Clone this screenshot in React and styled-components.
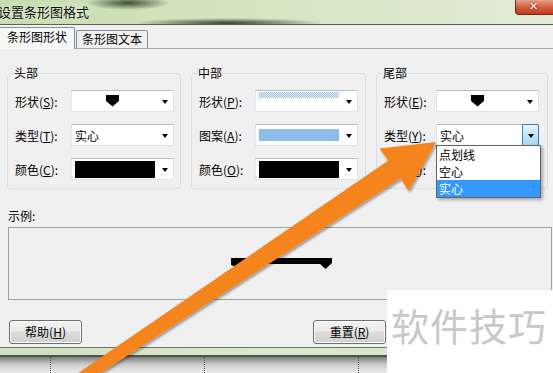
import styled, { createGlobalStyle } from 'styled-components';

const GlobalStyle = createGlobalStyle`
  html, body {
    margin: 0;
    padding: 0;
    background: #fff;
  }
  body {
    font-family: "Noto Sans CJK SC", "Noto Sans", sans-serif;
  }
`;

const Screen = styled.div`
  position: relative;
  width: 553px;
  height: 373px;
  overflow: hidden;
  background: #f0f0f0;
  font-size: 12px;
  color: #000;
`;

const TitleBar = styled.div`
  height: 24px;
  display: flex;
  align-items: center;
  justify-content: space-between;
  border-bottom: 1px solid #5b5f57;
  background:
    radial-gradient(ellipse 42px 7px at 128px 3px, rgba(38, 52, 32, 0.85), rgba(38, 52, 32, 0) 100%),
    radial-gradient(ellipse 95px 5px at 228px 23px, rgba(35, 45, 30, 0.9), rgba(35, 45, 30, 0) 100%),
    linear-gradient(90deg, #c6dbad 0%, #d3e3bf 35%, #d9e7c9 65%, #e1ebd6 100%);
`;

const Title = styled.div`
  margin-left: -2px;
  font-size: 13px;
  line-height: 24px;
  color: #111;
  text-shadow: 0 0 6px rgba(255, 255, 255, 0.9);
`;

const CloseButton = styled.div`
  align-self: flex-start;
  width: 44px;
  height: 15px;
  margin-right: -6px;
  box-sizing: border-box;
  border: 1px solid #7c2614;
  border-top: none;
  border-radius: 0 0 0 4px;
  background: linear-gradient(#eaa08a, #d2603f 50%, #c2391a);
  color: #fff;
  font-family: "DejaVu Sans", sans-serif;
  font-weight: bold;
  font-size: 11px;
  line-height: 14px;
  padding-left: 13px;
  text-shadow: 0 0 2px #5a1a0a;
`;

const TabStrip = styled.div`
  height: 23px;
  display: flex;
  align-items: flex-end;
  border-bottom: 1px solid #a5a9b0;
`;

const Tab = styled.div`
  box-sizing: border-box;
  height: ${(p) => (p.$active ? '22px' : '18px')};
  margin-bottom: ${(p) => (p.$active ? '-1px' : '0')};
  padding: 0 ${(p) => (p.$active ? '7px' : '5px')};
  margin-left: ${(p) => (p.$active ? '-1px' : '1px')};
  border: 1px solid #898c95;
  border-bottom: none;
  border-radius: 2px 2px 0 0;
  background: ${(p) => (p.$active ? '#f7f7f7' : '#f0f0f0')};
  line-height: ${(p) => (p.$active ? '17px' : '16px')};
  white-space: nowrap;
`;

const Panel = styled.div`
  box-sizing: border-box;
  height: 298px;
  padding: 16px 0 0 7px;
  display: flex;
  flex-direction: column;
`;

const Groups = styled.div`
  display: grid;
  grid-template-columns: 174px 175px 172px;
  column-gap: 10px;
`;

const Group = styled.fieldset`
  margin: 0;
  min-width: 0;
  padding: 9px 0 8px 7px;
  border: 1px solid #d5dfe5;
  border-radius: 3px;
  display: flex;
  flex-direction: column;
  gap: 12px;
`;

const Legend = styled.legend`
  padding: 0 1px;
  margin-left: -2px;
  line-height: 16px;
  font-size: 12px;
`;

const Row = styled.div`
  display: flex;
  align-items: center;
  height: 22px;
`;

const Label = styled.div`
  width: ${(p) => p.$w}px;
  flex: none;
  white-space: nowrap;
  u {
    text-decoration: underline;
  }
`;

const Combo = styled.div`
  position: relative;
  width: 103px;
  height: 22px;
  box-sizing: border-box;
  flex: none;
  display: flex;
  align-items: stretch;
  background: #fff;
  border: 1px solid #dfe4ea;
  border-top-color: #b9bcc2;
`;

const ComboValue = styled.div`
  flex: 1;
  display: flex;
  align-items: center;
  justify-content: ${(p) => (p.$center ? 'center' : 'flex-start')};
  padding-left: ${(p) => (p.$center ? '0' : '3px')};
  padding-right: ${(p) => (p.$center ? '4px' : '0')};
  min-width: 0;
`;

const DropButton = styled.div`
  width: 17px;
  flex: none;
  display: flex;
  align-items: center;
  justify-content: center;
  padding-top: 2px;
  box-sizing: border-box;
  border: ${(p) => (p.$focus ? '1px solid #3c7fb1' : 'none')};
  margin: ${(p) => (p.$focus ? '-1px -1px -1px 0' : '0')};
  background: ${(p) => (p.$focus ? 'linear-gradient(#e9f5fc, #c6e4f6 50%, #a7d4f0)' : 'transparent')};
  border-radius: ${(p) => (p.$focus ? '0 2px 2px 0' : '0')};

  &::before {
    content: '';
    border-left: 3.5px solid transparent;
    border-right: 3.5px solid transparent;
    border-top: 4px solid #000;
  }
`;

const Swatch = styled.div`
  width: 80px;
  height: ${(p) => p.$h}px;
  align-self: ${(p) => (p.$top ? 'flex-start' : 'center')};
  margin-top: ${(p) => (p.$top ? '1px' : '0')};
  background: ${(p) => p.$bg};
`;

const DropList = styled.div`
  position: absolute;
  top: 100%;
  left: -1px;
  width: 105px;
  box-sizing: border-box;
  border: 1px solid #646464;
  background: #fff;
  box-shadow: 2px 2px 3px rgba(0, 0, 0, 0.3);
  z-index: 2;
`;

const DropItem = styled.div`
  height: 17px;
  line-height: 17px;
  padding-left: 2px;
  background: ${(p) => (p.$selected ? '#3399ff' : 'transparent')};
  color: ${(p) => (p.$selected ? '#fff' : '#000')};
`;

const SampleLabel = styled.div`
  margin-top: 19px;
  margin-left: 1px;
  line-height: 16px;
`;

const Preview = styled.div`
  margin: 3px 0 0 1px;
  width: 544px;
  height: 73px;
  box-sizing: border-box;
  border: 1px solid #a0a0a0;
  display: flex;
  align-items: center;
  justify-content: center;
  padding-top: 1px;
  padding-left: 2px;
`;

const ButtonRow = styled.div`
  margin: 20px 0 0 2px;
  display: flex;
  gap: 231px;
`;

const Button = styled.div`
  width: 73px;
  height: 24px;
  box-sizing: border-box;
  border: 1px solid #707070;
  border-radius: 3px;
  background: linear-gradient(#f2f2f2, #ebebeb 45%, #dddddd 50%, #cfcfcf);
  box-shadow: inset 0 0 0 1px #fcfcfc;
  display: flex;
  align-items: center;
  justify-content: center;
  line-height: 22px;
  u {
    text-decoration: underline;
  }
`;

const BottomFrame = styled.div`
  border-top: 1px solid #6f7369;
`;

const GreenBand = styled.div`
  height: 7px;
  background: linear-gradient(90deg, #cfe0bd, #dbe8cd 50%, #d6e4c5);
  border-bottom: 2px solid #4f524c;
`;

const UnderWindow = styled.div`
  height: 20px;
  display: flex;
  background: linear-gradient(#7d7d7d, #c9c9c9 35%, #e6e6e6 70%, #ececec);
`;

const Column = styled.div`
  width: ${(p) => p.$w}px;
  flex: none;
  border-right: 1px dotted #555;
  box-sizing: border-box;
`;

const Watermark = styled.div`
  position: absolute;
  left: 387px;
  top: 290px;
  width: 170px;
  height: 90px;
  background: #fff;
  box-sizing: border-box;
  padding: 12px 0 0 4px;
  font-size: 38px;
  line-height: 46px;
  letter-spacing: 1px;
  color: #c8c8c8;
  white-space: nowrap;
`;

const Overlay = styled.svg`
  position: absolute;
  left: 0;
  top: 0;
  pointer-events: none;
  z-index: 3;
`;

const groups = [
  {
    title: '头部',
    labelWidth: 56,
    rows: [
      { label: '形状', key: 'S', kind: 'shape' },
      { label: '类型', key: 'T', kind: 'text', text: '实心' },
      { label: '颜色', key: 'C', kind: 'color' },
    ],
  },
  {
    title: '中部',
    labelWidth: 56,
    rows: [
      { label: '形状', key: 'P', kind: 'pattern' },
      { label: '图案', key: 'A', kind: 'fill' },
      { label: '颜色', key: 'O', kind: 'color' },
    ],
  },
  {
    title: '尾部',
    labelWidth: 52,
    rows: [
      { label: '形状', key: 'E', kind: 'shape' },
      { label: '类型', key: 'Y', kind: 'text', text: '实心', open: true },
      { label: '颜色', key: 'L', kind: 'color' },
    ],
  },
];

const dropOptions = ['点划线', '空心', '实心'];

const ShapeIcon = () => (
  <svg width="13" height="12" viewBox="0 0 13 12">
    <polygon points="0,0 13,0 13,6 6.5,11.5 0,6" fill="#000" />
  </svg>
);

const ComboContent = ({ kind, text }) => {
  if (kind === 'shape') {
    return (
      <ComboValue $center>
        <ShapeIcon />
      </ComboValue>
    );
  }
  if (kind === 'text') return <ComboValue>{text}</ComboValue>;
  if (kind === 'pattern') {
    return (
      <ComboValue>
        <Swatch
          $top
          $h={6}
          $bg="repeating-conic-gradient(#9cc3e6 0 25%, #e4eef8 0 50%) 0 0 / 2px 2px"
        />
      </ComboValue>
    );
  }
  if (kind === 'fill') {
    return (
      <ComboValue>
        <Swatch $h={12} $bg="#8fbde9" />
      </ComboValue>
    );
  }
  return (
    <ComboValue>
      <Swatch $h={17} $bg="#000" />
    </ComboValue>
  );
};

// 下拉框：带打开状态时显示列表
const ComboBox = ({ row }) => (
  <Combo>
    <ComboContent kind={row.kind} text={row.text} />
    <DropButton $focus={row.open} />
    {row.open && (
      <DropList>
        {dropOptions.map((o) => (
          <DropItem key={o} $selected={o === row.text}>
            {o}
          </DropItem>
        ))}
      </DropList>
    )}
  </Combo>
);

const PreviewLine = () => (
  <svg width="101" height="12" viewBox="0 0 101 12">
    <polygon points="0,0 18,0 18,6 8,10 0,7" fill="#000" />
    <rect x="0" y="0" width="100" height="6" fill="#000" />
    <polygon points="88,0 101,0 101,5 94.5,11 88,5" fill="#000" />
  </svg>
);

// 橙色箭头：从左下角指向下拉框
const Arrow = () => (
  <Overlay width="553" height="373" viewBox="0 0 553 373">
    <defs>
      <filter id="arrowShadow" x="-10%" y="-10%" width="130%" height="130%">
        <feDropShadow dx="1.5" dy="2" stdDeviation="1.2" floodColor="#000" floodOpacity="0.35" />
      </filter>
    </defs>
    <polygon
      points="436,142 408.5,191 400.5,178.5 81.5,385.2 74.9,375.2 388.3,160.6 379.5,148.5"
      fill="#f6841e"
      filter="url(#arrowShadow)"
    />
  </Overlay>
);

const App = () => {
  return (
    <>
      <GlobalStyle />
      <Screen>
        <TitleBar>
          <Title>设置条形图格式</Title>
          <CloseButton>✕</CloseButton>
        </TitleBar>
        <TabStrip>
          <Tab $active>条形图形状</Tab>
          <Tab>条形图文本</Tab>
        </TabStrip>
        <Panel>
          <Groups>
            {groups.map((g) => (
              <Group key={g.title}>
                <Legend>{g.title}</Legend>
                {g.rows.map((r) => (
                  <Row key={r.label}>
                    <Label $w={g.labelWidth}>
                      {r.label}(<u>{r.key}</u>):
                    </Label>
                    <ComboBox row={r} />
                  </Row>
                ))}
              </Group>
            ))}
          </Groups>
          <SampleLabel>示例:</SampleLabel>
          <Preview>
            <PreviewLine />
          </Preview>
          <ButtonRow>
            <Button>
              帮助(<u>H</u>)
            </Button>
            <Button>
              重置(<u>R</u>)
            </Button>
          </ButtonRow>
        </Panel>
        <BottomFrame>
          <GreenBand />
          <UnderWindow>
            <Column $w={51} />
            <Column $w={154} />
            <Column $w={154} />
          </UnderWindow>
        </BottomFrame>
        <Watermark>软件技巧</Watermark>
        <Arrow />
      </Screen>
    </>
  );
};

export default App;
